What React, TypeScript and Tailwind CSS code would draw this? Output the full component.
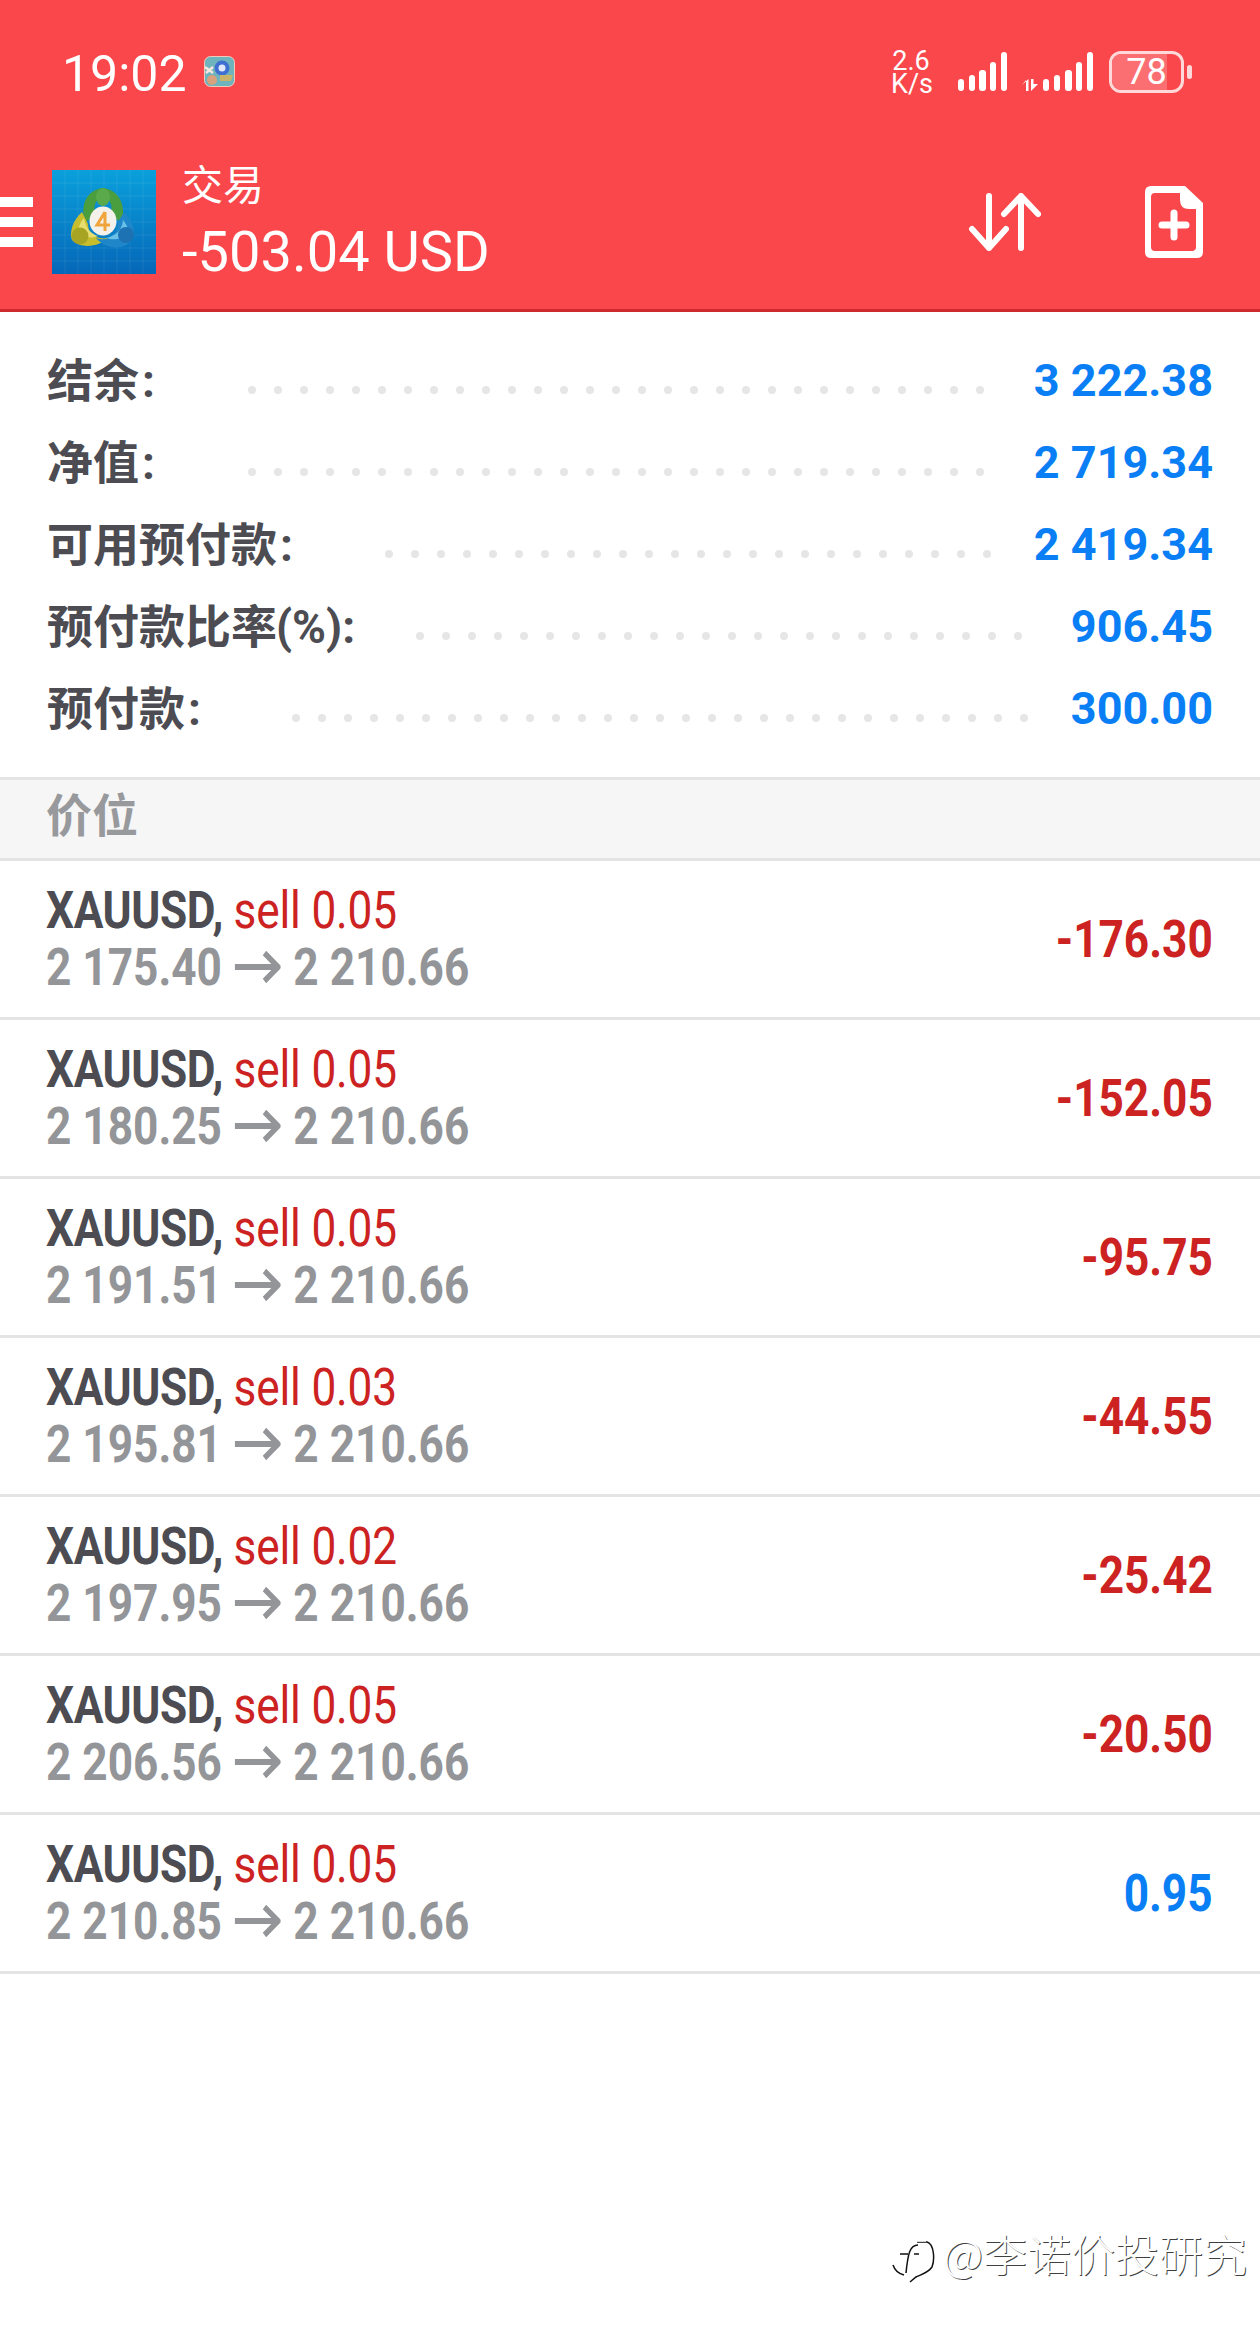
import React from "react";

const cjk = "font-['Roboto','Noto_Sans_CJK_SC',sans-serif]";

const summary = [
  { label: "结余", suffix: ":", value: "3 222.38", labelWidth: "w-[201px]", dots: 29, colon: "ml-[3px]" },
  { label: "净值", suffix: ":", value: "2 719.34", labelWidth: "w-[201px]", dots: 29, colon: "ml-[3px]" },
  { label: "可用预付款", suffix: ":", value: "2 419.34", labelWidth: "w-[338px]", dots: 24, colon: "ml-[3px]" },
  { label: "预付款比率", suffix: "(%):", value: "906.45", labelWidth: "w-[369px]", dots: 24, colon: "-ml-[1px]" },
  { label: "预付款", suffix: ":", value: "300.00", labelWidth: "w-[245px]", dots: 29, colon: "ml-[3px]" },
];

const positions = [
  { lots: "0.05", open: "2 175.40", profit: "-176.30" },
  { lots: "0.05", open: "2 180.25", profit: "-152.05" },
  { lots: "0.05", open: "2 191.51", profit: "-95.75" },
  { lots: "0.03", open: "2 195.81", profit: "-44.55" },
  { lots: "0.02", open: "2 197.95", profit: "-25.42" },
  { lots: "0.05", open: "2 206.56", profit: "-20.50" },
  { lots: "0.05", open: "2 210.85", profit: "0.95" },
];

function AppBadge() {
  return (
    <svg width="31" height="31" viewBox="0 0 31 31" className="ml-[19px] mt-[6px] shrink-0">
      <rect x="0.5" y="0.5" width="30" height="30" rx="6" fill="#6fb4bd" stroke="#f3c9b8" />
      <circle cx="18" cy="12" r="7.5" fill="#3f6fd0" />
      <circle cx="18" cy="12" r="3.5" fill="#dfe9fa" />
      <path d="M16 19 L29 19 L27 25 L16 25 Z" fill="#c9b36a" />
      <circle cx="8" cy="24" r="5" fill="#d9a27e" />
      <path d="M1 11 L9 17 M9 11 L2 17" stroke="#f7e6de" strokeWidth="2.5" />
    </svg>
  );
}

function SignalBars() {
  return (
    <svg width="50" height="39" viewBox="0 0 50 39" fill="#fff">
      <rect x="0" y="27" width="6" height="12" rx="3" />
      <rect x="11" y="23" width="6" height="16" rx="3" />
      <rect x="21" y="18" width="7" height="21" rx="3" />
      <rect x="32" y="10" width="6" height="29" rx="3" />
      <rect x="43" y="0" width="6" height="39" rx="3" />
    </svg>
  );
}

function SignalBarsData() {
  return (
    <svg width="72" height="39" viewBox="0 0 72 39" fill="#fff">
      <path d="M4 28 L4 39 L6.5 39 L6.5 27 L0 33 Z" />
      <path d="M9 27 L9 39 L16 32 L11.5 32 L11.5 27 Z" />
      <rect x="21" y="27" width="6" height="12" rx="3" />
      <rect x="32" y="23" width="6" height="16" rx="3" />
      <rect x="43" y="18" width="7" height="21" rx="3" />
      <rect x="54" y="10" width="6" height="29" rx="3" />
      <rect x="65" y="0" width="6" height="39" rx="3" />
    </svg>
  );
}

function Battery() {
  return (
    <div className="flex items-center gap-[3px]">
      <div className="relative w-[75px] h-[42px] rounded-[12px] border-[3px] border-[#ffd9da] overflow-hidden flex items-center justify-center">
        <div className="absolute left-0 top-0 bottom-0 w-[55px] bg-[#fb6f73]" />
        <span className="relative text-white text-[36px] leading-none font-['Roboto',sans-serif]">78</span>
      </div>
      <div className="w-[5px] h-[14px] rounded-full bg-[#ffd9da]" />
    </div>
  );
}

function Mt4Logo() {
  const lines = [13, 26, 39, 52, 65, 78, 91];
  return (
    <svg width="104" height="104" viewBox="0 0 104 104" className="shrink-0">
      <defs>
        <linearGradient id="mtbg" x1="0" y1="0" x2="0" y2="1">
          <stop offset="0" stopColor="#0aa0dc" />
          <stop offset="1" stopColor="#0567b8" />
        </linearGradient>
      </defs>
      <rect width="104" height="104" fill="url(#mtbg)" />
      {lines.map((x) => (
        <React.Fragment key={x}>
          <line x1={x} y1="0" x2={x} y2="104" stroke="#fff" strokeOpacity=".08" />
          <line x1="0" y1={x} x2="104" y2={x} stroke="#fff" strokeOpacity=".08" />
        </React.Fragment>
      ))}
      {/* three figures round the 4 */}
      <path d="M51 18 C34 20 28 36 33 52 L44 46 C40 36 44 28 51 27 C58 28 62 36 58 46 L70 52 C74 36 68 20 51 18 Z" fill="#4a9e3e" />
      <ellipse cx="51" cy="27" rx="7" ry="9" fill="#5aa94a" />
      <path d="M30 42 C21 50 17 62 20 70 C30 80 48 76 56 68 C44 70 36 64 36 54 Z" fill="#c8bd2c" />
      <path d="M32 48 C27 54 25 60 28 65 C36 68 42 68 46 66 C40 64 34 60 32 48 Z" fill="#e7de72" />
      <circle cx="28" cy="66" r="8.5" fill="#a8a423" />
      <path d="M72 42 C82 52 84 64 80 70 C70 82 52 78 44 68 C56 72 66 66 66 52 Z" fill="#1f87c9" />
      <path d="M71 50 C76 56 78 62 74 66 C68 70 60 70 54 68 C62 66 70 62 71 50 Z" fill="#6ac0e8" />
      <circle cx="74" cy="65" r="8" fill="#1c72b2" />
      <ellipse cx="51" cy="51" rx="13.5" ry="14.5" fill="#f4f1ea" />
      <path d="M53 42 L45 55 L58 55 M53 42 L53 61" fill="none" stroke="#f0a43c" strokeWidth="3" />
    </svg>
  );
}

function SortIcon() {
  return (
    <svg width="72" height="58" viewBox="0 0 72 58" fill="none" stroke="#fff" strokeWidth="6" strokeLinecap="round" strokeLinejoin="round">
      <path d="M20 3 L20 55 M3 36 L20 55 L37 36" />
      <path d="M52 55 L52 3 M35 21 L52 3 L69 21" />
    </svg>
  );
}

function NewDocIcon() {
  return (
    <svg width="58" height="72" viewBox="0 0 58 72" fill="none">
      <path
        fillRule="evenodd"
        d="M6 0 H40 L58 17 V66 Q58 72 52 72 H6 Q0 72 0 66 V6 Q0 0 6 0 Z M10 7 Q6 7 6 11 V61 Q6 65 10 65 H47 Q51 65 51 61 V23 H44 Q35 23 35 14 V7 Z"
        fill="#fff"
      />
      <path d="M29 27 V51 M17 39 H41" stroke="#fff" strokeWidth="7" strokeLinecap="round" />
    </svg>
  );
}

function PriceArrow() {
  return (
    <svg width="54" height="32" viewBox="0 0 54 32" fill="none" stroke="#939598" strokeWidth="6" className="mx-[15px] inline-block">
      <path d="M0 16 H51" />
      <path d="M35 2 L51 16 L35 30" />
    </svg>
  );
}

function Header() {
  return (
    <header className="bg-[#fa474b] h-[312px] border-b-[3px] border-[#cf2a2d] flex flex-col">
      <div className="h-[146px] flex items-start justify-between pt-[50px]">
        <div className="flex items-start pl-[62px]">
          <span className="mt-[1px] text-white text-[50px] h-[46px] leading-[46px] font-['Roboto',sans-serif] w-[123px] whitespace-nowrap">
            19:02
          </span>
          <AppBadge />
        </div>
        <div className="flex items-start pr-[68px]">
          <div className="w-[40px] text-white text-[27px] leading-[23px] font-['Roboto',sans-serif] text-center">
            <div>2.6</div>
            <div>K/s</div>
          </div>
          <div className="ml-[27px] mt-[2px] flex items-start gap-[14px]">
            <SignalBars />
            <SignalBarsData />
          </div>
          <div className="ml-[15px] mt-[1px]">
            <Battery />
          </div>
        </div>
      </div>
      <div className="h-[163px] pb-[12px] flex items-center">
        <div className="w-[33px] flex flex-col gap-[10px] shrink-0">
          <div className="h-[10px] bg-white" />
          <div className="h-[10px] bg-white" />
          <div className="h-[10px] bg-white" />
        </div>
        <div className="ml-[19px] flex">
          <Mt4Logo />
        </div>
        <div className={`ml-[26px] -mt-[5px] text-white ${cjk}`}>
          <div className="text-[41px] leading-[66px]">交易</div>
          <div className="text-[56px] leading-[66px] whitespace-nowrap">-503.04 USD</div>
        </div>
        <div className="ml-auto mr-[57px] flex items-center gap-[104px]">
          <SortIcon />
          <NewDocIcon />
        </div>
      </div>
    </header>
  );
}

type SummaryRowProps = {
  label: string;
  suffix: string;
  value: string;
  labelWidth: string;
  dots: number;
  colon: string;
};

function SummaryRow({ label, suffix, value, labelWidth, dots, colon }: SummaryRowProps) {
  return (
    <div className="h-[82px] flex items-center pl-[47px] pr-[47px]">
      <div className={`${labelWidth} shrink-0 whitespace-nowrap text-[46px] font-bold text-[#4c4c52] ${cjk}`}>
        {label}
        <span className={`inline-block ${colon}`}>{suffix}</span>
      </div>
      <div className="flex gap-[18px] mt-[18px] shrink-0">
        {Array.from({ length: dots }).map((_, i) => (
          <span key={i} className="w-[8px] h-[8px] rounded-full bg-[#e6e6e6]" />
        ))}
      </div>
      <div className="ml-auto text-[45px] font-bold text-[#0a7ff5] font-['Roboto',sans-serif] whitespace-nowrap">{value}</div>
    </div>
  );
}

function PositionRow({ lots, open, profit }: { lots: string; open: string; profit: string }) {
  const loss = profit.startsWith("-");
  return (
    <div className="h-[159px] border-b-[3px] border-[#e4e4e4] pl-[46px] pr-[47px] flex items-center justify-between font-['Roboto',sans-serif]">
      <div className="-mt-[1px] text-[52px] leading-[57px] origin-left scale-x-[.85] w-[560px] whitespace-nowrap">
        <div>
          <span className="font-bold text-[#4c4c52] tracking-[-0.5px]">XAUUSD, </span>
          <span className="text-[#cc2222] tracking-[-0.2px]">sell {lots}</span>
        </div>
        <div className="font-bold text-[#939598] flex items-center">
          <span>{open}</span>
          <PriceArrow />
          <span>2 210.66</span>
        </div>
      </div>
      <div className={`mt-[1px] text-[52px] font-bold origin-right scale-x-[.85] whitespace-nowrap ${loss ? "text-[#cc2222]" : "text-[#0a7ff5]"}`}>
        {profit}
      </div>
    </div>
  );
}

function Watermark() {
  return (
    <div className="absolute right-[13px] top-[2222px] flex items-center text-white text-[44px] leading-none font-light [text-shadow:1px_1px_0_rgba(0,0,0,.75)] font-['Noto_Sans_CJK_SC',sans-serif] whitespace-nowrap">
      <svg width="44" height="46" viewBox="0 0 44 46" fill="none" strokeWidth="1.5" className="mr-[8px] mt-[16px]">
        <g stroke="#111" transform="translate(1 1)">
          <path d="M25 3 L35 3 C42 5 43 20 40 28 C36 34 28 36 24 38 L18 43" />
          <path d="M1 26 C3 32 8 35 12 36" />
          <path d="M26 6 C18 6 16 14 14 34 M8 15 H16 M22 15 H27" />
        </g>
        <g stroke="#fff">
          <path d="M12 3 C4 6 0 16 1 26 M25 3 L35 3" />
        </g>
      </svg>
      <span>@李诺价投研究</span>
    </div>
  );
}

export default function App() {
  return (
    <div className="relative w-[1260px] h-[2326px] bg-white overflow-hidden">
      <Header />
      <section className="pt-[28px] h-[465px]">
        {summary.map((row) => (
          <SummaryRow key={row.label} {...row} />
        ))}
      </section>
      <div className={`h-[84px] pb-[6px] bg-[#f6f6f6] border-y-[3px] border-[#e4e4e4] pl-[46px] flex items-center text-[46px] font-bold text-[#98999c] ${cjk}`}>
        <span>价位</span>
      </div>
      <section>
        {positions.map((p) => (
          <PositionRow key={p.open} {...p} />
        ))}
      </section>
      <Watermark />
    </div>
  );
}
